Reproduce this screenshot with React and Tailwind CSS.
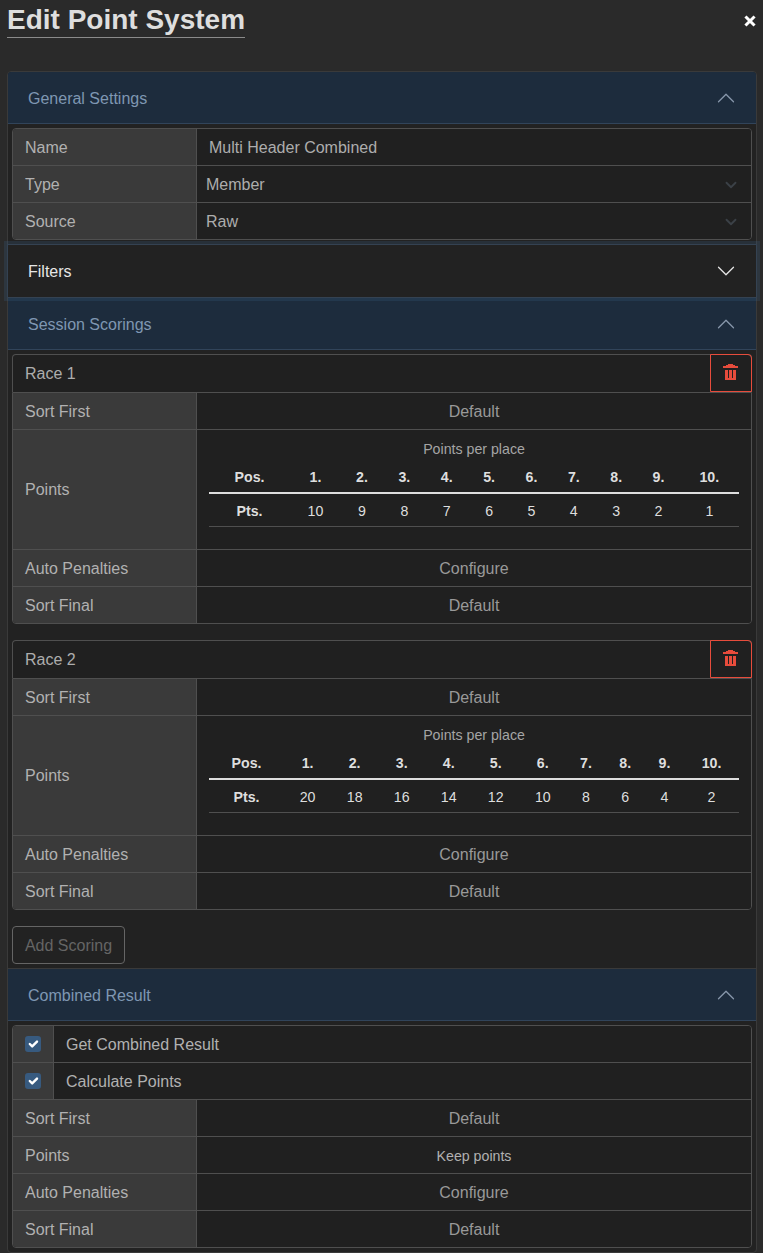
import React from 'react';

function Chevron({ up = false, className = '' }) {
  return (
    <svg viewBox="0 0 16 16" className={`size-5 shrink-0 ${up ? 'rotate-180' : ''} ${className}`} fill="currentColor">
      <path d="M1.646 4.646a.5.5 0 0 1 .708 0L8 10.293l5.646-5.647a.5.5 0 0 1 .708.708l-6 6a.5.5 0 0 1-.708 0l-6-6a.5.5 0 0 1 0-.708z" />
    </svg>
  );
}

function Header({ title, className = '' }) {
  return (
    <div className={`flex items-center justify-between border-b border-[#31445a] bg-[#1d2c3d] px-5 text-[#7f97b2] ${className}`}>
      <span className="pt-[2px]">{title}</span>
      <Chevron up className="text-[#8797ab]" />
    </div>
  );
}

function Row({ label, children, tall = false, last = false }) {
  const height = tall ? 'h-[120px]' : last ? 'h-[36px]' : 'h-[37px]';
  const nudge = tall ? '' : 'pt-[2px]';
  return (
    <div className={`flex border-b border-[#4f4f4f] last:border-b-0 ${height}`}>
      <div className={`flex w-[184px] shrink-0 items-center border-r border-[#4f4f4f] bg-[#3a3a3a] pl-3 text-[#b1b1b1] ${nudge}`}>{label}</div>
      <div className={`flex min-w-0 flex-1 items-center justify-center bg-[#202020] text-[#999] ${nudge}`}>{children}</div>
    </div>
  );
}

function Box({ children }) {
  return <div className="overflow-hidden rounded border border-[#4f4f4f]">{children}</div>;
}

function Select({ value }) {
  return (
    <div className="flex w-full items-center justify-between pr-[14px] pl-[9px] text-[#adadad]">
      <span>{value}</span>
      <svg viewBox="0 0 16 16" className="mb-px size-3" fill="none" stroke="#3b4147" strokeWidth="2.4" strokeLinecap="round" strokeLinejoin="round">
        <path d="m2 5 6 6 6-6" />
      </svg>
    </div>
  );
}

function Trash() {
  return (
    <svg viewBox="0 0 16 16" className="mb-[2px] size-4" fill="#e74c3c" shapeRendering="crispEdges">
      <path d="M5 0h5v1h2v1h3v2H0V2h3V1h2zM2 6h3v8h1V6h3v8h1V6h3v10H2z" />
    </svg>
  );
}

function Scoring({ name, points }) {
  return (
    <div className="flex flex-col">
      <div className="flex h-[38px] rounded-t border border-b-0 border-[#4f4f4f] bg-[#202020]">
        <div className="flex flex-1 items-center pl-3 text-[#adadad]">{name}</div>
        <button className="-mt-px -mr-px flex h-[38px] w-[42px] items-center justify-center rounded-tr border border-[#e74c3c]">
          <Trash />
        </button>
      </div>
      <div className="overflow-hidden rounded-b border border-[#4f4f4f]">
        <Row label="Sort First">Default</Row>
        <Row label="Points" tall>
          <div className="h-full w-full px-3 pt-2 text-[14.2px]">
            <div className="text-center leading-[22px] text-[#a5a5a5]">Points per place</div>
            <table className="w-full border-collapse text-center text-[#dedede]">
              <thead>
                <tr className="h-[33px] border-b-2 border-[#dedede]">
                  <th className="px-1 pt-[2px] pb-0">Pos.</th>
                  {points.map((p, i) => <th key={i} className="px-1 pt-[2px] pb-0">{i + 1}.</th>)}
                </tr>
              </thead>
              <tbody>
                <tr className="h-[33px] border-b border-[#4f4f4f]">
                  <th className="px-1 pt-[2px] pb-0">Pts.</th>
                  {points.map((p, i) => <td key={i} className="px-1 pt-[2px] pb-0">{p}</td>)}
                </tr>
              </tbody>
            </table>
          </div>
        </Row>
        <Row label="Auto Penalties">Configure</Row>
        <Row label="Sort Final" last>Default</Row>
      </div>
    </div>
  );
}

function CheckRow({ label }) {
  return (
    <div className="flex h-[37px] border-b border-[#4f4f4f]">
      <div className="flex w-[41px] shrink-0 items-center border-r border-[#4f4f4f] bg-[#3a3a3a] pl-3">
        <span className="flex size-4 items-center justify-center rounded-[3px] bg-[#375a7f]">
          <svg viewBox="0 0 20 20" className="size-4" fill="none" stroke="#fff" strokeWidth="3" strokeLinecap="round" strokeLinejoin="round">
            <path d="m6 10 3 3 6-6" />
          </svg>
        </span>
      </div>
      <div className="flex flex-1 items-center bg-[#202020] pt-[2px] pl-3 text-[#b1b1b1]">{label}</div>
    </div>
  );
}

export default function App() {
  return (
    <div className="h-[1253px] w-[763px] overflow-hidden bg-[#2a2a2a] pr-[6px] pl-[7px] font-['Liberation_Sans',Arial,sans-serif] text-base leading-6">
      <div className="flex h-[71px] items-start justify-between">
        <h1 className="h-[38px] border-b border-[#8a8a8a] pt-[3px] text-[28px] leading-[34px] font-bold text-[#dedede]">Edit Point System</h1>
        <svg viewBox="0 0 12 12" className="mt-[15px] mr-px size-3" fill="none" stroke="#fff" strokeWidth="3" strokeLinecap="square">
          <path d="M2.5 2.5l7 7M9.5 2.5l-7 7" />
        </svg>
      </div>
      <div className="h-[1182px] rounded border border-[#3a3a3a] bg-[#222]">
        <Header title="General Settings" className="h-[52px] rounded-t-[3px]" />
        <div className="p-1">
          <Box>
            <Row label="Name"><span className="w-full pl-3 text-[#adadad]">Multi Header Combined</span></Row>
            <Row label="Type"><Select value="Member" /></Row>
            <Row label="Source" last><Select value="Raw" /></Row>
          </Box>
        </div>
        <div className="relative z-10 -mx-px flex h-[54px] items-center justify-between border border-[#344252] px-5 text-[#e6e6e6] shadow-[0_0_0_3px_rgba(55,90,127,0.25)]">
          <span className="pt-[2px]">Filters</span>
          <Chevron />
        </div>
        <Header title="Session Scorings" className="h-[52px]" />
        <div className="flex flex-col gap-4 p-1">
          <Scoring name="Race 1" points={[10, 9, 8, 7, 6, 5, 4, 3, 2, 1]} />
          <Scoring name="Race 2" points={[20, 18, 16, 14, 12, 10, 8, 6, 4, 2]} />
          <button className="h-[38px] w-[113px] rounded border border-[#656565] pt-[2px] text-[#656565]">Add Scoring</button>
        </div>
        <Header title="Combined Result" className="h-[53px] border-t border-t-[#3a3a3a]" />
        <div className="p-1">
          <Box>
            <CheckRow label="Get Combined Result" />
            <CheckRow label="Calculate Points" />
            <Row label="Sort First">Default</Row>
            <Row label="Points"><span className="text-[14.2px] text-[#b1b1b1]">Keep points</span></Row>
            <Row label="Auto Penalties">Configure</Row>
            <Row label="Sort Final" last>Default</Row>
          </Box>
        </div>
      </div>
    </div>
  );
}
